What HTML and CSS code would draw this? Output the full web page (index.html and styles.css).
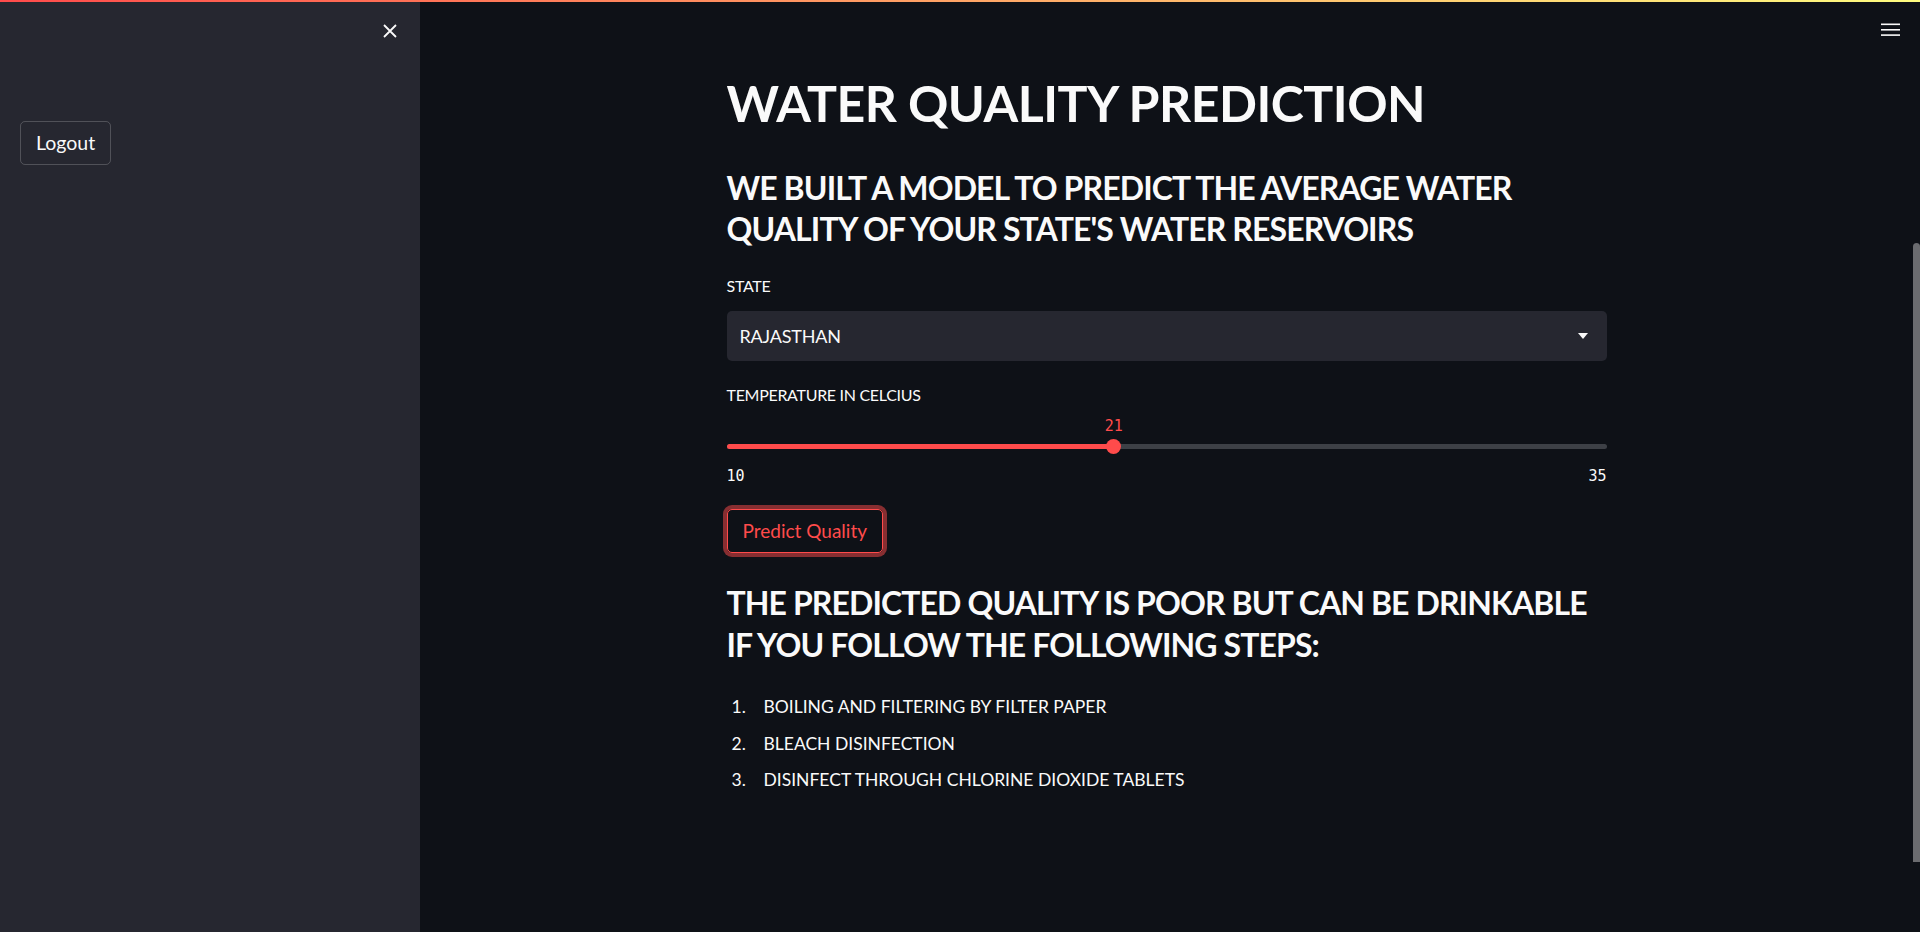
FILE: index.html
```html
<!DOCTYPE html>
<html lang="en">
<head>
    <meta charset="UTF-8">
    <meta name="viewport" content="width=device-width, initial-scale=1.0">
    <title>Water Quality Prediction</title>
    <link rel="stylesheet" href="styles.css">
</head>
<body>

    <div class="decoration"></div>

    <div class="app">
        <aside class="sidebar">
            <div class="sidebar-header">
                <button class="close-btn" aria-label="Close sidebar">
                    <svg width="14" height="14" viewBox="0 0 14 14">
                        <path d="M1 1 L13 13 M13 1 L1 13" stroke="#fafafa" stroke-width="1.8" fill="none"/>
                    </svg>
                </button>
            </div>
            <button class="btn">Logout</button>
        </aside>

        <main class="main">
            <button class="menu-btn" aria-label="Menu">
                <svg width="19" height="14" viewBox="0 0 19 14">
                    <rect x="0" y="0.5" width="19" height="1.6" fill="#fafafa"/>
                    <rect x="0" y="6" width="19" height="1.6" fill="#fafafa"/>
                    <rect x="0" y="11.3" width="19" height="1.6" fill="#fafafa"/>
                </svg>
            </button>

            <div class="block">
                <h1>WATER QUALITY PREDICTION</h1>
                <h3 class="subtitle">WE BUILT A MODEL TO PREDICT THE AVERAGE WATER QUALITY OF YOUR STATE'S WATER RESERVOIRS</h3>

                <label class="label label-state">STATE</label>
                <div class="select">
                    <span>RAJASTHAN</span>
                    <span class="caret"></span>
                </div>

                <label class="label label-temp">TEMPERATURE IN CELCIUS</label>
                <div class="slider">
                    <div class="slider-track">
                        <div class="slider-fill" style="width: 44%"></div>
                        <div class="slider-thumb" style="left: 44%">
                            <span class="slider-value">21</span>
                        </div>
                    </div>
                </div>
                <div class="slider-ticks">
                    <span>10</span>
                    <span>35</span>
                </div>

                <button class="btn btn-focus">Predict Quality</button>

                <h3 class="result">THE PREDICTED QUALITY IS POOR BUT CAN BE DRINKABLE IF YOU FOLLOW THE FOLLOWING STEPS:</h3>

                <ol class="steps">
                    <li>BOILING AND FILTERING BY FILTER PAPER</li>
                    <li>BLEACH DISINFECTION</li>
                    <li>DISINFECT THROUGH CHLORINE DIOXIDE TABLETS</li>
                </ol>
            </div>

            <div class="scroll-thumb"></div>
        </main>
    </div>

</body>
</html>
```

FILE: styles.css
```css
* {
    box-sizing: border-box;
}
body {
    font-family: "Lato", sans-serif;
    background-color: #0e1117;
    color: #fafafa;
    margin: 0;
    height: 932px;
    overflow: hidden;
}
.decoration {
    position: absolute;
    top: 0;
    left: 0;
    right: 0;
    height: 2px;
    background: linear-gradient(90deg, #ff4b4b, #fffd80);
    z-index: 10;
}
.app {
    display: flex;
    height: 100%;
}

/* sidebar */
.sidebar {
    width: 420px;
    flex-shrink: 0;
    background: #262730;
    padding: 0 20px;
}
.sidebar-header {
    display: flex;
    justify-content: flex-end;
    padding-top: 24px;
    padding-right: 3px;
    height: 121px;
}
.close-btn {
    background: none;
    border: none;
    padding: 0;
    width: 14px;
    height: 14px;
    cursor: pointer;
}
.close-btn svg {
    display: block;
}

/* buttons */
.btn {
    font-family: "Lato", sans-serif;
    font-size: 19.5px;
    line-height: 42px;
    height: 44px;
    padding: 0 15px;
    color: #fafafa;
    background: transparent;
    border: 1px solid rgba(250, 250, 250, 0.2);
    border-radius: 5px;
    cursor: pointer;
}
.btn-focus {
    display: block;
    margin-top: 24.2px;
    font-size: 19px;
    color: #ff4b4b;
    border-color: #ff4b4b;
    box-shadow: 0 0 0 4px rgba(255, 75, 75, 0.5);
}

/* main */
.main {
    flex: 1;
    position: relative;
    display: flex;
    justify-content: center;
    padding-right: 7px;
    padding-top: 73.3px;
}
.menu-btn {
    position: absolute;
    top: 23px;
    right: 20px;
    background: none;
    border: none;
    padding: 0;
    cursor: pointer;
}
.menu-btn svg {
    display: block;
}
.scroll-thumb {
    position: absolute;
    top: 243px;
    right: 0;
    width: 7px;
    height: 619px;
    background: #6b6c70;
    border-radius: 4px 4px 0 0;
}
.block {
    width: 880px;
}
h1 {
    font-size: 50px;
    line-height: 61px;
    letter-spacing: -0.5px;
    font-weight: 700;
    margin: 0;
}
h3 {
    font-size: 32px;
    line-height: 41.5px;
    letter-spacing: -0.9px;
    font-weight: 700;
    margin: 0;
}
.subtitle {
    margin-top: 32.5px;
}
.result {
    margin-top: 29.5px;
}
.label {
    display: block;
    font-size: 16px;
    line-height: 22px;
    letter-spacing: -0.3px;
}
.label-state {
    margin-top: 24.9px;
}
.label-temp {
    margin-top: 23.4px;
}

/* select */
.select {
    margin-top: 14.3px;
    height: 50px;
    background: #262730;
    border-radius: 5px;
    display: flex;
    align-items: center;
    justify-content: space-between;
    padding: 0 19px 0 13px;
    font-size: 18px;
    letter-spacing: -0.2px;
    line-height: 22px;
}
.caret {
    width: 0;
    height: 0;
    border-left: 5.5px solid transparent;
    border-right: 5.5px solid transparent;
    border-top: 6px solid #fafafa;
}

/* slider */
.slider {
    padding-top: 37.6px;
}
.slider-track {
    position: relative;
    height: 5px;
    border-radius: 3px;
    background: #3d4046;
}
.slider-fill {
    height: 100%;
    border-radius: 3px;
    background: #ff4b4b;
}
.slider-thumb {
    position: absolute;
    top: 50%;
    width: 15px;
    height: 15px;
    margin: -7.5px 0 0 -7.5px;
    border-radius: 50%;
    background: #ff4b4b;
}
.slider-value {
    position: absolute;
    bottom: 19px;
    left: 50%;
    transform: translateX(-50%);
    font-family: "DejaVu Sans Mono", monospace;
    font-size: 15px;
    line-height: 18px;
    color: #ff4b4b;
}
.slider-ticks {
    display: flex;
    justify-content: space-between;
    margin-top: 17.8px;
    font-family: "DejaVu Sans Mono", monospace;
    font-size: 15px;
    line-height: 18px;
}

/* steps */
.steps {
    list-style: none;
    counter-reset: step;
    margin: 24px 0 0;
    padding: 0;
}
.steps li {
    counter-increment: step;
    display: flex;
    font-size: 17.5px;
    line-height: 36.3px;
}
.steps li::before {
    content: counter(step) ".";
    width: 32px;
    padding-left: 5px;
    flex-shrink: 0;
}
```
